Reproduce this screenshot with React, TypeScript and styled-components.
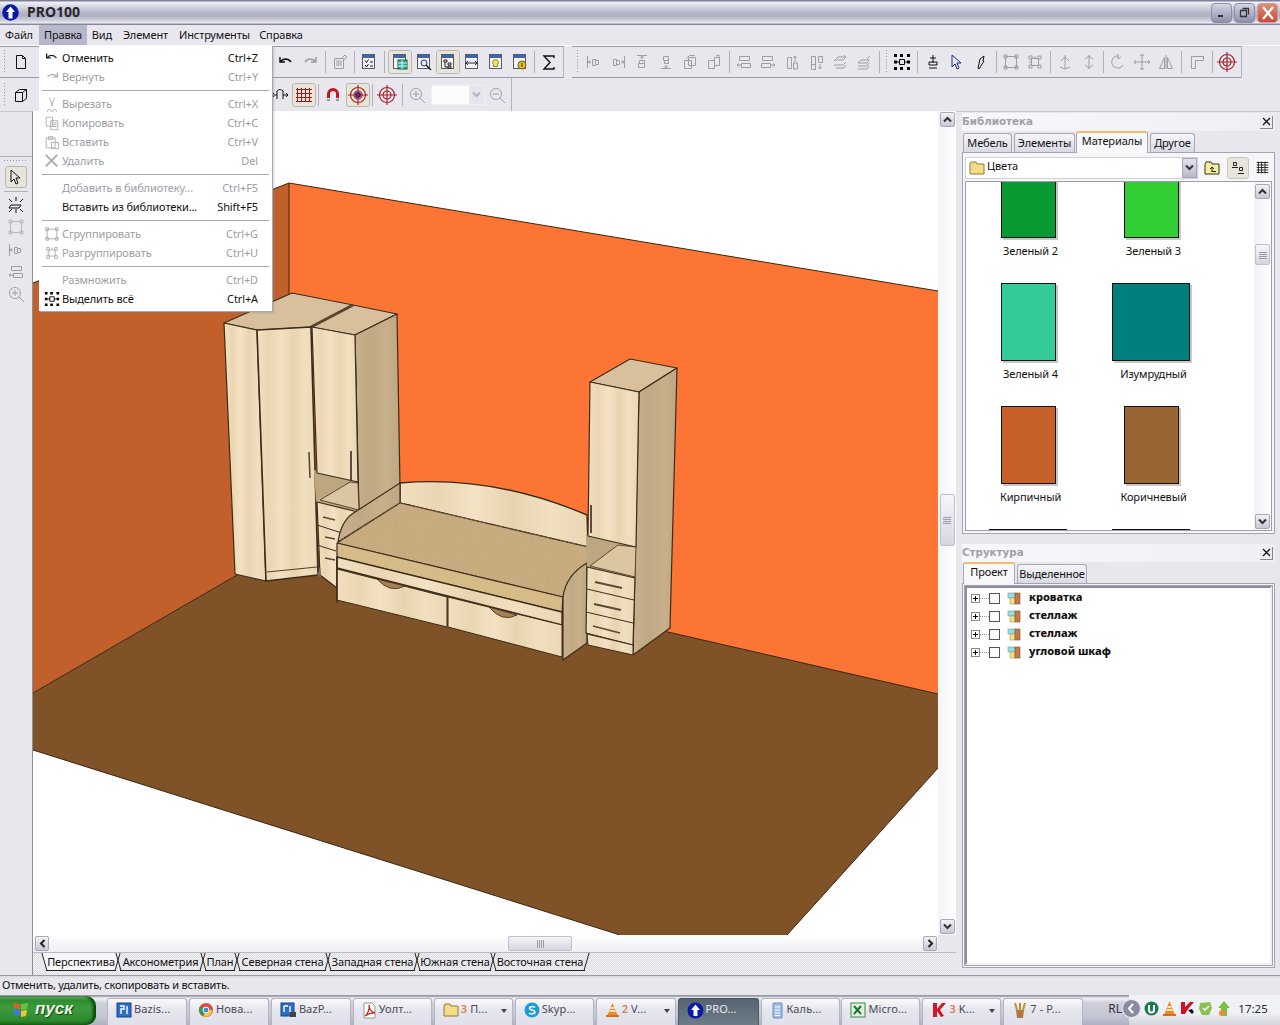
import React from "react";
import styled, { createGlobalStyle } from "styled-components";

const UI = `"Noto Sans", "Liberation Sans", sans-serif`;
const FACE = "#e9e7ee";
const DIS = "#9d9da6";

const Global = createGlobalStyle`
  html, body { margin: 0; padding: 0; width: 1280px; height: 1025px; overflow: hidden; background: ${FACE}; }
  * { box-sizing: border-box; }
  #root { width: 1280px; height: 1025px; }
`;

const Page = styled.div`
  width: 1280px; height: 1025px; display: flex; flex-direction: column;
  font: 11px/13px ${UI}; letter-spacing: -0.12px; color: #111; background: ${FACE}; overflow: hidden; position: relative;
`;

/* ---------- title ---------- */
const TitleBar = styled.div`
  height: 25px; flex: none; display: flex; align-items: center; padding: 0 2px 0 2px;
  background: linear-gradient(#7d7f9c 0, #7d7f9c 1px, #f1f1f6 2px, #e0e0e9 5px, #b3b5c6 13px, #aeb0c2 16px, #dcdde6 22px, #f2f2f6 23px, #85879a 24px, #85879a 25px);
`;
const AppLogo = styled.svg`width: 17px; height: 17px; flex: none;`;
const TitleText = styled.span`
  margin-left: 8px; padding-bottom: 2px; font: bold 14px/16px "Noto Sans", sans-serif; color: #26262e; flex: 1; letter-spacing: 0;
`;
const WinBtn = styled.div<{ $red?: boolean }>`
  width: 21px; height: 20px; margin-left: 2px; border-radius: 4px; border: 1px solid ${p => (p.$red ? "#c9a09a" : "#8b8da6")};
  background: ${p => p.$red ? "linear-gradient(#e08a78,#c74a38)" : "linear-gradient(#d4d6e4,#8d90ab)"};
  display: flex; align-items: center; justify-content: center;
`;

/* ---------- menu ---------- */
const MenuBar = styled.div`
  height: 21px; flex: none; display: flex; padding-left: 1px; background: ${FACE}; border-bottom: 1px solid #fbfbfd; position: relative;
`;
const MenuItem = styled.div<{ $on?: boolean; $w: number; $ml?: number }>`
  width: ${p => p.$w}px; height: 20px; margin-left: ${p => p.$ml || 0}px; padding-bottom: 2px; display: flex; align-items: center; justify-content: center; font-size: 11px;
  background: ${p => (p.$on ? "#b6b8ca" : "transparent")};
`;
const Dropdown = styled.div`
  position: absolute; left: 39px; top: 46px; width: 233px; height: 265px; background: #fff; z-index: 5; padding: 2px 3px 2px 3px;
  box-shadow: 1px 1px 0 #a8a8b0, 2px 2px 2px #8886;
`;
const DropRow = styled.div<{ $dim?: boolean }>`
  height: 19px; display: flex; align-items: center; color: ${p => (p.$dim ? DIS : "#111")};
`;
const DropIcon = styled.div`width: 20px; height: 19px; flex: none; display: flex; align-items: center; justify-content: center;`;
const DropLabel = styled.span`flex: 1;`;
const DropKey = styled.span`margin-right: 11px;`;
const DropSep = styled.div`height: 8px; display: flex; align-items: center; &::before { content: ""; flex: 1; height: 1px; background: #a8a8b2; }`;

/* ---------- toolbars ---------- */
const ToolRow = styled.div<{ $h: number }>`height: ${p => p.$h}px; flex: none; display: flex; background: ${FACE};`;
const Band = styled.div<{ $w: number; $left?: number; $flat?: boolean }>`
  width: ${p => p.$w}px; margin-left: ${p => p.$left || 0}px; flex: none; display: flex; align-items: center; position: relative;
  border-right: 1px solid #b5b5c0;
  ${p => (p.$flat ? "" : "border-bottom: 1px solid #9a9aa6; border-top: 1px solid #9a9aa6;")}
`;
const Grip = styled.div<{ $w: number }>`
  width: ${p => p.$w}px; height: 24px; flex: none; display: flex; justify-content: center;
  &::before { content: ""; width: 1px; height: 100%; background: repeating-linear-gradient(#9a9aa4 0 1px, transparent 1px 3px); }
`;
const Gap = styled.div<{ $w: number }>`width: ${p => p.$w}px; flex: none;`;
const Tool = styled.div<{ $on?: boolean; $w?: number }>`
  width: ${p => p.$w || 24}px; height: 24px; flex: none; display: flex; align-items: center; justify-content: center;
  ${p => p.$on ? "border: 1px solid #b8b8a8; border-radius: 3px; background: #e7e5d9; box-shadow: inset 0 0 1px #fff;" : ""}
`;
const Sep = styled.div<{ $w: number }>`
  width: ${p => p.$w}px; height: 22px; flex: none; display: flex; justify-content: center;
  &::before { content: ""; width: 1px; height: 100%; background: #b0b0ba; }
`;
const ZoomCombo = styled.div`
  width: 54px; height: 20px; flex: none; background: #fbfbfc; border: 1px solid #efeef2; display: flex; justify-content: flex-end; align-items: center;
`;
const ComboArrowBox = styled.div`width: 15px; height: 18px; background: #e6e4ec; display: flex; align-items: center; justify-content: center;`;

/* ---------- main ---------- */
const Main = styled.div`flex: 1; min-height: 0; display: flex; background: ${FACE};`;
const LeftBar = styled.div`
  width: 33px; flex: none; display: flex; flex-direction: column; padding-top: 44px; border-right: 1px solid #8e8e98; border-top: 1px solid #c8c8d0;
`;
const LeftBand = styled.div`
  display: flex; flex-direction: column; align-items: center; border-top: 1px solid #b0b0b8; padding-top: 3px;
  & > ${Tool} { width: 22px; height: 22.2px; }
`;
const HGrip = styled.div`width: 24px; height: 1px; margin: 0 0 5px; background: repeating-linear-gradient(90deg, #9a9aa4 0 1px, transparent 1px 3px);`;
const HSep = styled.div`width: 24px; height: 1px; background: #b0b0ba; margin: 3px 0 2px;`;

const Center = styled.div`width: 923px; flex: none; display: flex; flex-direction: column;`;
const ViewRow = styled.div`flex: 1; min-height: 0; display: flex;`;
const Scene = styled.svg`width: 905px; height: 824px; display: block; flex: none; background: #fff;`;
const VBar = styled.div`
  width: 18px; flex: none; display: flex; flex-direction: column; align-items: center; padding: 1px 0;
  background: linear-gradient(90deg,#f4f4f8,#fff);
`;
const SBtn = styled.div<{ $w?: number; $h?: number }>`
  width: ${p => p.$w || 15}px; height: ${p => p.$h || 15}px; flex: none; border: 1px solid #a8a8b6; border-radius: 2px;
  background: linear-gradient(#f2f2f6,#c7c8d6); display: flex; align-items: center; justify-content: center;
`;
const Thumb = styled.div<{ $w: number; $h: number }>`
  width: ${p => p.$w}px; height: ${p => p.$h}px; flex: none; border: 1px solid #c0c0cc; border-radius: 2px;
  background: linear-gradient(#f6f6f9,#d5d6e0); display: flex; align-items: center; justify-content: center;
`;
const Fill = styled.div`flex: 1;`;
const Pad = styled.div<{ $h?: number; $w?: number }>`flex: none; height: ${p => (p.$h ? p.$h + "px" : "auto")}; width: ${p => (p.$w ? p.$w + "px" : "auto")};`;
const HBar = styled.div`
  height: 17px; flex: none; display: flex; align-items: center; padding: 0 1px 0 2px; width: 905px;
  background: linear-gradient(#fff,#eeeef3);
`;
const TabStrip = styled.div`
  height: 23px; flex: none; display: flex; padding: 0 0 0 11px; border-top: 1px solid #b8b8c4;
  background-color: #eeeef2;
  background-image: repeating-conic-gradient(#dcdce2 0 25%, #f3f3f6 0 50%);
  background-size: 2px 2px;
`;
const SheetTab = styled.div<{ $w: number; $on?: boolean }>`
  width: ${p => p.$w}px; height: 18px; flex: none; position: relative; display: flex; align-items: center; justify-content: center;
  padding-bottom: 2px; font-size: 11px; color: #111;
  &::before {
    content: ""; position: absolute; left: -2px; right: -2px; top: 0; bottom: 0;
    background: ${p => (p.$on ? "#f6f6f9" : "transparent")};
    clip-path: polygon(0 0, 100% 0, calc(100% - 5px) 100%, 5px 100%);
  }
  &::after {
    content: ""; position: absolute; left: 2px; right: 2px; top: 0; bottom: 0;
    border-bottom: 1px solid #222;
  }
`;
const TabLabel = styled.span`position: relative; z-index: 1;`;
const Slash = styled.i<{ $dir: "l" | "r" }>`
  position: absolute; top: 0; height: 18px; width: 1px; background: #222; z-index: 1;
  ${p => (p.$dir === "l" ? "left: 0; transform: skewX(16deg);" : "right: 0; transform: skewX(-16deg);")}
`;

/* ---------- right panels ---------- */
const Right = styled.div`width: 324px; flex: none; display: flex; flex-direction: column; padding: 1px 5px 7px 6px; border-top: 1px solid #c8c8d0;`;
const DockHead = styled.div`
  height: 18px; flex: none; display: flex; align-items: center; justify-content: space-between;
  background: linear-gradient(90deg,#f8f8fb,#efeef4);
`;
const DockTitle = styled.span`font: bold 10.3px/14px "DejaVu Sans", sans-serif; color: #a0a0a8; letter-spacing: 0; padding-bottom: 2px;`;
const DockClose = styled.div`width: 13px; height: 13px; flex: none; display: flex; align-items: center; justify-content: center; border-right: 1px solid #888; border-bottom: 1px solid #888; margin-right: 2px;`;
const Tabs = styled.div`height: 21px; flex: none; display: flex; align-items: flex-end; padding-left: 1px; gap: 2px;`;
const Tab = styled.div<{ $w: number; $on?: boolean; $ml?: number }>`
  width: ${p => p.$w}px; height: 19px; flex: none; margin-left: ${p => p.$ml || 0}px; padding-bottom: 2px;
  display: flex; align-items: center; justify-content: center; font-size: 11px; position: relative;
  border: 1px solid #a8a8b4; border-bottom: 0; border-radius: 3px 3px 0 0;
  background: ${p => (p.$on ? "#f8f8fa" : "linear-gradient(#f6f6f9,#d8d9e4)")};
  ${p => p.$on ? "border-top: 2px solid #f0bc70; margin-bottom: -1px; height: 22px; padding-bottom: 5px; z-index: 1;" : ""}
`;
const TabBody = styled.div<{ $h?: number }>`
  ${p => (p.$h ? `height: ${p.$h}px; flex: none;` : "flex: 1; min-height: 0;")}
  display: flex; flex-direction: column; border: 1px solid #a4a4ae; padding: 2px; background: #f6f6f9;
`;
const ComboRow = styled.div`height: 24px; flex: none; display: flex; align-items: center; padding-top: 1px;`;
const FolderCombo = styled.div`
  width: 233px; height: 22px; flex: none; background: #fff; border: 1px solid #d0d0d8; display: flex; align-items: center; padding-left: 3px; gap: 2px;
`;
const ComboText = styled.span`flex: 1; font-size: 11px; padding-bottom: 5px;`;
const ComboBtn = styled.div`width: 15px; height: 20px; background: linear-gradient(#e2e3ec,#b7b9ca); border: 1px solid #a6a8b8; display: flex; align-items: center; justify-content: center;`;
const MiniBtn = styled.div<{ $on?: boolean; $ml: number }>`
  width: 22px; height: 22px; flex: none; margin-left: ${p => p.$ml}px; display: flex; align-items: center; justify-content: center;
  ${p => (p.$on ? "background:#e7e5d9;border:1px solid #c6c6bc;border-radius:3px;" : "")}
`;
const ListBox = styled.div`
  flex: 1; min-height: 0; margin-top: 2px; display: flex; background: #fff; border: 1px solid #9c9caa; overflow: hidden;
`;
const Tiles = styled.div`
  flex: 1; min-width: 0; display: grid; grid-template-columns: 123px 123px; grid-auto-rows: 123px; padding-left: 3px; margin-top: -22px; align-content: start;
`;
const Tile = styled.div`display: flex; flex-direction: column; align-items: center;`;
const SwatchBox = styled.div`height: 78px; flex: none; display: flex; align-items: flex-start; justify-content: center; margin-right: 5px;`;
const Swatch = styled.div<{ $c: string; $w: number }>`
  width: ${p => p.$w}px; height: 78px; background: ${p => p.$c}; border: 1px solid #111; box-shadow: 2px 2px 0 #c8c8c8;
`;
const TileLabel = styled.div`margin-top: 6px; height: 14px; font-size: 11px; line-height: 14px; text-align: center;`;
const ListScroll = styled.div`
  width: 17px; flex: none; margin-left: auto; display: flex; flex-direction: column; align-items: center; padding: 2px 0 1px; background: linear-gradient(90deg,#f0f0f6,#fff);
`;
const Tree = styled.div`
  flex: 1; min-height: 0; background: #fff; border: 2px solid; border-color: #8d8d98 #f0f0f4 #f0f0f4 #8d8d98; padding: 1px 0 0 3px; display: flex; flex-direction: column;
  outline: 1px solid #a4a4ae;
`;
const TreeRow = styled.div`height: 18px; flex: none; display: flex; align-items: center; padding-left: 1px;`;
const Plus = styled.div`
  width: 9px; height: 9px; flex: none; border: 1px solid #888; background: #fff; position: relative;
  &::before { content: ""; position: absolute; left: 1px; right: 1px; top: 3px; height: 1px; background: #000; }
  &::after { content: ""; position: absolute; top: 1px; bottom: 1px; left: 3px; width: 1px; background: #000; }
`;
const Dots = styled.div`width: 9px; height: 1px; flex: none; background: repeating-linear-gradient(90deg,#999 0 1px,transparent 1px 2px);`;
const Check = styled.div`width: 11px; height: 11px; flex: none; border: 1px solid #555; background: #fbfbfb;`;
const TreeIcon = styled.svg`width: 14px; height: 13px; flex: none; margin-left: 7px;`;
const TreeText = styled.span`margin-left: 8px; font: 800 11px/14px "Noto Sans", sans-serif; letter-spacing: 0; color: #111; padding-bottom: 2px;`;

/* ---------- status + taskbar ---------- */
const Status = styled.div`
  height: 20px; flex: none; display: flex; align-items: center; padding: 0 0 2px 2px; font-size: 11px; letter-spacing: -0.22px;
  background: linear-gradient(#d8d8de,#e8e8ec 3px,#e8e8ec);
  border-top: 1px solid #9a9aa4;
`;
const Taskbar = styled.div`
  height: 30px; flex: none; display: flex; align-items: stretch;
  background: linear-gradient(#9898a8 0,#9898a8 1px,#f2f2f6 3px,#cfd0dc 8px,#c4c5d3 22px,#aeb0c0 100%);
`;
const Start = styled.div`
  width: 96px; flex: none; display: flex; align-items: center; padding: 0 0 3px 12px; gap: 5px; border-radius: 0 10px 10px 0;
  background: linear-gradient(#7cb97c 0,#2f8d2f 4px,#3d9a3d 12px,#2e8a2e 24px,#1e6c1e 100%);
  box-shadow: inset -3px 0 3px #0a4a0a; margin-top: 1px;
`;
const StartText = styled.span`font: italic bold 17px/18px "Liberation Sans", sans-serif; letter-spacing: 0; color: #e6f2e6; text-shadow: 1px 1px 1px #124012;`;
const Tasks = styled.div`display: flex; padding-left: 11px; gap: 1.95px; flex: none; align-items: flex-end;`;
const Task = styled.div<{ $on?: boolean; $w: number }>`
  width: ${p => p.$w}px; height: 27px; flex: none; display: flex; align-items: center; padding: 0 0 4px 8px; gap: 2px; position: relative;
  font-size: 11px; color: ${p => (p.$on ? "#e8eaee" : "#4a4a58")}; border-radius: 3px 3px 0 0;
  background: ${p => (p.$on ? "linear-gradient(#56646f,#6d7c87)" : "linear-gradient(#fafafc,#e6e6ee 40%,#dfe0ea)")};
  border: 1px solid ${p => (p.$on ? "#4d5962" : "#b4b4c2")}; border-bottom: 0;
`;
const TaskText = styled.span`padding-bottom: 3px; letter-spacing: 0.1px;`;
const TaskCount = styled.span`color: #d9805a; font-weight: 600;`;
const TaskArrow = styled.i`position: absolute; right: 5px; top: 10px; width: 0; height: 0; border: 3px solid transparent; border-top: 4px solid #444; border-bottom: 0;`;
const Lang = styled.div`flex: none; margin-left: 25px; width: 18px; display: flex; align-items: center; padding-bottom: 3px; font-size: 12px; color: #333;`;
const Tray = styled.div`
  flex: 1; display: flex; align-items: center; margin-left: 3px; gap: 3px; padding-bottom: 3px;
  background: linear-gradient(#f2f3f6,#eef0f3 60%,#d4d6de); position: relative;
`;
const Clock = styled.span`margin-left: 4px; font-size: 11.5px; letter-spacing: 0; color: #2a2a34;`;
const TrayI = styled.svg`width: 15px; height: 17px; flex: none;`;
const Chevron = styled.svg`width: 19px; height: 19px; flex: none; margin-left: -7px;`;

/* ---------- icon helper ---------- */
type IP = { d: string; c?: string; f?: string; w?: number; s?: number };
const Ico = ({ d, c = "#111", f = "none", w = 1, s = 18 }: IP) => (
  <svg width={s} height={s} viewBox="0 0 18 18" fill={f} stroke={c} strokeWidth={w}><path d={d} /></svg>
);
const P = {
  doc: "M4.5 2.5h6l3 3v10h-9zM10.500 2.5v3h3",
  cube: "M3.5 6.5l4-3h7v9l-4 3h-7zM3.5 6.5h7v9M10.500 6.5l4-3",
  undo: "M3 4v5h5M3.5 9C6 5 11 5 14 9",
  redo: "M15 4v5h-5M14.500 9C12 5 7 5 4 9",
  prop: "M3.5 5.5h9v10h-9zM5 8h6M5 10h6M5 12h6M11 5l3-3 2 2-3 3",
  sigma: "M14 5V3H4l6 6.500L4 16h10v-2",
  al1: "M2.5 3v12M3 9h3M5 7.5L3 9l2 1.500M7.5 6.5h3v6h-3zM10.500 7.5h3v4h-3z",
  al2: "M15.500 3v12M15 9h-3M13 7.5L15 9l-2 1.500M4.5 6.5h3v6h-3zM7.5 7.5h3v4h-3z",
  al3: "M4 2.5h10M9 3v3M7.5 5L9 3l1.500 2M6.5 7.5h5v3h-5zM5.5 10.500h6v4h-6z",
  al4: "M4 15.500h10M9 15v-3M7.5 13L9 15l1.500-2M6.5 3.5h5v4h-5zM7.5 7.5h4v3h-4z",
  al5: "M3.5 7.5h7v8h-7zM7.5 4.5h7v8h-7zM5.5 5.5l3-3h5",
  al6: "M3.5 7.5h6v8h-6zM9.500 4.5h5v8h-5zM11 3l3-1v3",
  d1: "M4.5 3.5h10v4h-10zM6.5 10.500h9v4h-9zM2 12h4M4 10.500L2 12l2 1.500",
  d2: "M3.5 3.5h10v4h-10zM2.5 10.500h9v4h-9zM12 12h4M14 10.500l2 1.500-2 1.500",
  d3: "M4.5 4.5h4v11h-4zM12 9V3M10.500 5L12 3l1.500 2M10.500 10h4v6h-4z",
  d4: "M4.5 3.5h4v8h-4zM11.500 3.5h4v6h-4zM13 11v5M11.500 14l1.500 2 1.500-2M4.5 11.500h4v5h-4z",
  d5: "M3 8l4-4h8l-3 3H4zM3 12h9l3-3M5 15h8l2-3M13 2l2 2",
  d6: "M3 10l3-3h8l-2 3zM3 13h9l2-3M3 16h9l2-3M12 6l3-3",
  plusm: "M9 2v8M6 5h6M5 9h8v3H5zM5 15h8",
  pen: "M6 15l2-9 4-3-1 5 1 0-5 8z",
  grp: "M3.5 3.5h11v11h-11zM2 2h3v3H2zM13 2h3v3h-3zM2 13h3v3H2zM13 13h3v3h-3z",
  ungrp: "M5.5 5.5h7v7h-7zM3 3h3v3H3zM12 3h3v3h-3zM3 12h3v3H3zM12 12h3v3h-3zM9 3v2M3 9h2",
  rot1: "M9 2v14M5 8l4-4 4 4M4 14l5 2 5-2",
  rot2: "M9 2v14M5 12l4 3 4-3M5 6l4-3 4 3",
  ccw: "M9 3a6 6 0 1 0 5 9M9 1v5l3-2",
  move: "M9 1v16M1 9h16M7 3l2-2 2 2M7 15l2 2 2-2M3 7L1 9l2 2M15 7l2 2-2 2",
  mirror: "M9 2v14M7.5 15.500h-5l5-11zM10.500 15.500h5l-5-11z",
  corner: "M3.5 3.5h12v4h-8v8h-4z",
  zoomIn: "M8 2.5a5.500 5.500 0 1 1-.1 0zM5 8h6M8 5v6M12 12l5 5",
  zoomOut: "M8 2.5a5.500 5.500 0 1 1-.1 0zM5 8h6M12 12l5 5",
  sun: "M4 9h10l-2 3H2zM2 3l3 3M16 3l-3 3M9 1v4M2 16l3-3M16 16l-3-3M9 13v4",
  cut: "M6 2l4 9M12 2l-4 9M6 15a2 2 0 1 1-.1 0zM12 15a2 2 0 1 1-.1 0z",
  copy: "M2.5 2.5h7v10h-7zM7.5 6.5h8v10h-8zM9 9h5M9 11h5M9 13h5",
  paste: "M2.5 4.5h10v11h-10zM5 3h5v3H5zM8.5 9.500h8v7h-8z",
  del: "M2 2l13 13M15 2L2 15",
  listI: "M2 3h14M2 6h14M2 9h14M2 12h14M2 15h14M4 2v14M8 2v14M12 2v14",
  arrow: "M4 2l0 12 3-3 2 5 2-1-2-5h4z",
};
const GripIcon = ({ s = 18 }: { s?: number }) => (
  <svg width={s} height={s} viewBox="0 0 18 18">
    <path d="M1 1h3v3H1zM7 1h3v3H7zM14 1h3v3h-3zM1 14h3v3H1zM7 14h3v3H7zM14 14h3v3h-3zM1 7.500h3v3H1zM14 7.500h3v3h-3z" fill="#000" />
    <path d="M6.500 6.500h5v5h-5zM4 9h3M11 9h3" fill="none" stroke="#000" />
  </svg>
);
const WinIcon = ({ children }: { children?: React.ReactNode }) => (
  <svg width="18" height="18" viewBox="0 0 18 18" fill="none">
    <rect x="2.500" y="1.500" width="12" height="14" fill="#f4f4f8" stroke="#59596a" />
    <rect x="3" y="2" width="11" height="3" fill="#3f66a8" />
    {children}
  </svg>
);
const Tgt = ({ fillC }: { fillC?: string }) => (
  <svg width="20" height="20" viewBox="0 0 20 20" fill="none" stroke="#a8202c" strokeWidth="1.2">
    <circle cx="10" cy="10" r="7.500" /><circle cx="10" cy="10" r="4" />
    {fillC && <circle cx="10" cy="10" r="3" fill={fillC} stroke="none" />}
    <path d="M10 0v20M0 10h20" />
  </svg>
);
const Dn = ({ c = "#333" }: { c?: string }) => <svg width="9" height="7" viewBox="0 0 9 7" fill="none" stroke={c} strokeWidth="2"><path d="M1 1.500l3.500 3.500L8 1.500" /></svg>;
const Up = () => <svg width="9" height="7" viewBox="0 0 9 7" fill="none" stroke="#333" strokeWidth="2"><path d="M1 5.500L4.500 2 8 5.500" /></svg>;
const Lf = () => <svg width="7" height="9" viewBox="0 0 7 9" fill="none" stroke="#222" strokeWidth="2"><path d="M5.500 1L2 4.500 5.500 8" /></svg>;
const Rg = () => <svg width="7" height="9" viewBox="0 0 7 9" fill="none" stroke="#222" strokeWidth="2"><path d="M1.500 1L5 4.500 1.500 8" /></svg>;
const VGrip = () => <svg width="8" height="8" viewBox="0 0 8 8" stroke="#9a9aa8"><path d="M0 1.500h8M0 3.500h8M0 5.500h8M0 7.500h8" /></svg>;
const HGripI = () => <svg width="8" height="8" viewBox="0 0 8 8" stroke="#9a9aa8"><path d="M1.500 0v8M3.500 0v8M5.500 0v8M7.500 0v8" /></svg>;
const FolderI = ({ s = 16 }: { s?: number }) => (
  <svg width={s} height={s - 2} viewBox="0 0 16 14"><path d="M1 3l1-2h5l1 2h7v10H1z" fill="#f3dd88" stroke="#927a30" /></svg>
);

const dropdown: (null | { t: string; k: string; i?: keyof typeof P | "grip"; dim?: boolean })[] = [
  { t: "Отменить", k: "Ctrl+Z", i: "undo" },
  { t: "Вернуть", k: "Ctrl+Y", i: "redo", dim: true },
  null,
  { t: "Вырезать", k: "Ctrl+X", i: "cut", dim: true },
  { t: "Копировать", k: "Ctrl+C", i: "copy", dim: true },
  { t: "Вставить", k: "Ctrl+V", i: "paste", dim: true },
  { t: "Удалить", k: "Del", i: "del", dim: true },
  null,
  { t: "Добавить в библиотеку...", k: "Ctrl+F5", dim: true },
  { t: "Вставить из библиотеки...", k: "Shift+F5" },
  null,
  { t: "Сгруппировать", k: "Ctrl+G", i: "grp", dim: true },
  { t: "Разгруппировать", k: "Ctrl+U", i: "ungrp", dim: true },
  null,
  { t: "Размножить", k: "Ctrl+D", dim: true },
  { t: "Выделить всё", k: "Ctrl+A", i: "grip" },
];

const Wood = "url(#wood)";
const Side = "url(#side)";
const E = "#3c2c1c";
const Poly = ({ p, f, w = 1.2 }: { p: string; f: string; w?: number }) => <polygon points={p} fill={f} stroke={E} strokeWidth={w} strokeLinejoin="round" />;
const Ln = ({ a, w = 1.2, c = E }: { a: [number, number, number, number]; w?: number; c?: string }) => <line x1={a[0]} y1={a[1]} x2={a[2]} y2={a[3]} stroke={c} strokeWidth={w} />;

const Room = () => (
  <Scene viewBox="33 111 905 824">
    <defs>
      <linearGradient id="wood" x1="0" x2="1" y1="0" y2="0">
        <stop offset="0" stopColor="#f1dfc0" /><stop offset=".2" stopColor="#ebd6b2" /><stop offset=".4" stopColor="#f3e2c4" />
        <stop offset=".6" stopColor="#e9d4af" /><stop offset=".8" stopColor="#f1dfbf" /><stop offset="1" stopColor="#ebd7b4" />
      </linearGradient>
      <linearGradient id="side" x1="0" x2="1" y1="0" y2="0">
        <stop offset="0" stopColor="#c9b18d" /><stop offset=".35" stopColor="#bfa883" /><stop offset=".7" stopColor="#c8b08b" /><stop offset="1" stopColor="#bda680" />
      </linearGradient>
      <filter id="speck" x="0" y="0" width="100%" height="100%">
        <feTurbulence type="fractalNoise" baseFrequency="0.7" numOctaves="2" seed="4" result="n" />
        <feColorMatrix in="n" type="matrix" values="0 0 0 0 0.45  0 0 0 0 0.35  0 0 0 0 0.2  0 0 0 .9 -.3" result="m" />
        <feComposite in="m" in2="SourceGraphic" operator="in" result="c" />
        <feMerge><feMergeNode in="SourceGraphic" /><feMergeNode in="c" /></feMerge>
      </filter>
    </defs>
    <polygon points="289,183 938,291 938,694 289,545" fill="#fd7535" />
    <polygon points="33,283 289,183 289,545 33,693" fill="#c1602a" />
    <polygon points="33,693 289,545 938,694 938,768 787,935 620,935 33,750" fill="#7f5327" />
    <path d="M33 283L289 183L938 291M289 183V545M33 693L289 545L938 694M33 750L620 935M938 768L787 935" fill="none" stroke="#3c2410" strokeWidth="1" />

    {/* corner wardrobe */}
    <Poly p="224,323 292,293 353,305 311,327 257,330" f="#d8c09c" />
    <Poly p="224,323 257,330 266,581 235,574" f={Wood} />
    <Poly p="257,330 311,327 318,575 266,581" f={Wood} w={1.6} />
    <Ln a={[267, 572, 317, 567]} w={0.9} />
    <Ln a={[309, 452, 310, 478]} w={1.6} c="#5a4a3a" />
    {/* wall cabinet */}
    <polygon points="314,470 358,480 359,512 316,502" fill="#bda680" />
    <Poly p="311,327 353,305 397,314 355,335" f="#d8c09c" />
    <Ln a={[311, 327, 353, 305]} w={3} c="#5a4630" />
    <Poly p="355,335 397,314 400,486 359,510" f={Side} />
    <Poly p="312,327 355,335 358,482 317,473" f={Wood} />
    <Ln a={[351, 451, 351, 480]} w={1.8} c="#4a3c30" />
    <Poly p="350,482 358,483 359,510 320,500" f="#dcc6a2" w={0.8} />
    {/* left drawers */}
    <Poly p="317,502 358,512 337,560 337,588 320,575" f={Wood} />
    <Ln a={[317, 525, 342, 533]} w={1} />
    <Ln a={[317, 545, 336, 551]} w={1} />
    <Ln a={[323, 517, 335, 520]} w={1.6} c="#5a4a3a" />
    <Ln a={[325, 537, 335, 539]} w={1.6} c="#5a4a3a" />
    <Ln a={[325, 558, 335, 560]} w={1.6} c="#5a4a3a" />
    <polygon points="317,575 320,567 321,577" fill="#7a7264" />

    {/* bed */}
    <path d="M400 483Q493 475 587 515L588 547L400 503Z" fill={Wood} stroke={E} strokeWidth="1.4" />
    <path d="M400 483L400 503L338 542Q341 522 352 514Z" fill={Side} stroke={E} strokeWidth="1.2" />
    <polygon points="400,503 588,547 588,563 563,597 337,543" fill="#cbae80" stroke={E} strokeWidth="1.2" filter="url(#speck)" />
    <Poly p="337,543 563,597 562,612 337,557" f="#d6ba88" />
    <Poly p="337,557 562,612 562,625 337,568" f={Wood} w={1.4} />
    <Poly p="337,569 447,597 447,627 337,600" f={Wood} w={1} />
    <Poly p="448,597 562,625 562,657 448,627" f={Wood} w={1} />
    <path d="M377 579Q390 594 405 586Z" fill="#a98050" stroke={E} strokeWidth="0.8" />
    <path d="M489 607Q502 623 517 615Z" fill="#a98050" stroke={E} strokeWidth="0.8" />
    <path d="M563 597Q566 575 587 563L587 643L563 660Z" fill={Side} stroke={E} strokeWidth="1.2" />
    <Ln a={[337, 557, 337, 603]} w={1.4} />

    {/* right cabinet */}
    <Poly p="590,382 630,359 677,368 639,392" f="#d8c09c" />
    <polygon points="586,534 637,545 636,579 587,568" fill="#bda680" />
    <Poly p="639,392 677,368 670,628 633,655" f={Side} />
    <Poly p="590,382 639,392 636,547 588,536" f={Wood} />
    <Ln a={[591, 505, 591, 533]} w={1.8} c="#4a3c30" />
    <Poly p="618,545 636,547 635,577 590,566" f="#dcc6a2" w={0.8} />
    <Poly p="587,567 635,578 633,645 586,633" f={Wood} />
    <Ln a={[587, 589, 634, 600]} w={1} />
    <Ln a={[586, 612, 633, 623]} w={1} />
    <Ln a={[595, 582, 622, 588]} w={1.8} c="#5a4a3a" />
    <Ln a={[594, 604, 621, 610]} w={1.8} c="#5a4a3a" />
    <Ln a={[593, 626, 620, 633]} w={1.8} c="#5a4a3a" />
    <Poly p="587,634 633,645 633,655 588,645" f={Wood} w={1} />
  </Scene>
);

const sheetTabs: [string, number][] = [["Перспектива", 74], ["Аксонометрия", 85], ["План", 34], ["Северная стена", 91], ["Западная стена", 89], ["Южная стена", 76], ["Восточная стена", 94]];
const tiles: [string, string, number][] = [
  ["Зеленый 2", "#0a9a33", 55], ["Зеленый 3", "#32cd32", 55],
  ["Зеленый 4", "#33cc99", 55], ["Изумрудный", "#007f7f", 78],
  ["Кирпичный", "#c8602a", 55], ["Коричневый", "#996633", 55],
  ["", "#ffffff", 78], ["", "#ffffff", 78],
];

const Win = (path: string, c = "#333") => <svg width="11" height="11" viewBox="0 0 11 11" fill="none" stroke={c} strokeWidth="1.3"><path d={path} /></svg>;

const tasks: { t: string; c?: string; arrow?: boolean; on?: boolean; w: number; icon: React.ReactNode }[] = [
  { t: "Bazis...", w: 80, icon: <svg width="16" height="16" viewBox="0 0 16 16"><rect x="1" y="1" width="14" height="14" fill="#2a6fc8" stroke="#1c3f80" /><path d="M4 4h4v3H5v5M11 4v8" stroke="#fff" strokeWidth="1.400" fill="none" /></svg> },
  { t: "Нова...", w: 80, icon: <svg width="16" height="16" viewBox="0 0 16 16"><circle cx="8" cy="8" r="7" fill="#dd4b3a" /><path d="M8 8L14.500 8A7 7 0 0 1 5 14.300z" fill="#f4c534" /><path d="M8 8L5 14.300A7 7 0 0 1 1.800 4.500z" fill="#3a9a48" /><circle cx="8" cy="8" r="3" fill="#4a88e0" stroke="#fff" /></svg> },
  { t: "BazP...", w: 80, icon: <svg width="17" height="16" viewBox="0 0 17 16"><rect x="1" y="1" width="13" height="13" fill="#2a6fc8" stroke="#1c3f80" /><path d="M4 4h4M4 4v6M10 4v6" stroke="#fff" strokeWidth="1.400" /><rect x="10" y="10" width="6" height="5" fill="#444" /></svg> },
  { t: "Уолт...", w: 79, icon: <svg width="15" height="17" viewBox="0 0 15 17"><path d="M2 1h8l3 3v12H2z" fill="#fff" stroke="#999" /><path d="M3 14C6 12 8 6 7 3c0 4 3 7 6 8-4-.5-7 1-10 3z" fill="none" stroke="#c8201c" strokeWidth="1.300" /></svg> },
  { t: "П...", c: "3", arrow: true, w: 79, icon: <FolderI /> },
  { t: "Skyp...", w: 79, icon: <svg width="16" height="16" viewBox="0 0 16 16"><circle cx="8" cy="8" r="7.500" fill="#1e9cd8" /><path d="M11 5.500C9 4 5 4.500 5.500 6.500S11 8 11 10s-4.500 2.500-6 1" stroke="#fff" strokeWidth="1.500" fill="none" /></svg> },
  { t: "V...", c: "2", arrow: true, w: 80, icon: <svg width="15" height="16" viewBox="0 0 15 16"><path d="M7.500 1l5 12H2.500z" fill="#f28a1c" /><path d="M5.500 6h4M4.500 9h6" stroke="#fff" strokeWidth="1.300" /><rect x="1" y="13" width="13" height="2" fill="#d0701c" /></svg> },
  { t: "PRO...", on: true, w: 81, icon: <svg width="17" height="17" viewBox="0 0 17 17"><circle cx="8.500" cy="8.500" r="8" fill="#0a1aa8" /><path d="M8.500 2.500L13 8h-2.500v6h-4V8H4z" fill="#fff" /></svg> },
  { t: "Каль...", w: 79, icon: <svg width="15" height="17" viewBox="0 0 15 17"><rect x="3" y="1" width="9" height="15" rx="1" fill="#9fc0e8" stroke="#6a8ab0" /><path d="M5 5h5M5 8h5M5 11h5M5 13.500h5" stroke="#fff" /></svg> },
  { t: "Micro...", w: 79, icon: <svg width="16" height="16" viewBox="0 0 16 16"><rect x="1" y="1" width="14" height="14" fill="#e4f0e0" stroke="#3a8a3a" /><path d="M4 4l7 8M11 4l-7 8" stroke="#1a7a2a" strokeWidth="2" /></svg> },
  { t: "K...", c: "3", arrow: true, w: 79, icon: <svg width="16" height="16" viewBox="0 0 16 16"><path d="M2 1h4v6l5-6h4L9 8l4 6-3 1-4-6v6H2z" fill="#d01828" /></svg> },
  { t: "7 - P...", w: 80, icon: <svg width="16" height="17" viewBox="0 0 16 17"><path d="M3 1l2 7M8 1v7M13 1l-2 7" stroke="#c09030" strokeWidth="2" /><path d="M4 8h8l-1 8H5z" fill="#b07840" /></svg> },
];

export default function App() {
  return (
    <Page>
      <Global />
      <TitleBar>
        <AppLogo viewBox="0 0 17 17"><circle cx="8.500" cy="8.500" r="8.300" fill="#0a1aa8" /><path d="M8.500 2.500L13 8h-2.500v6.500h-4V8H4z" fill="#fff" /></AppLogo>
        <TitleText>PRO100</TitleText>
        <WinBtn><svg width="10" height="10" viewBox="0 0 10 10"><rect x="1" y="7" width="5" height="2" fill="#333" /></svg></WinBtn>
        <WinBtn>{Win("M3.500 1.500h6v6M1.500 3.500h6v6h-6z")}</WinBtn>
        <WinBtn $red><svg width="14" height="14" viewBox="0 0 14 14" stroke="#fff" strokeWidth="2.200"><path d="M2 1l10 12M12 1L2 13" /></svg></WinBtn>
      </TitleBar>

      <MenuBar>
        <MenuItem $w={36}>Файл</MenuItem>
        <MenuItem $w={48} $on $ml={2}>Правка</MenuItem>
        <MenuItem $w={30}>Вид</MenuItem>
        <MenuItem $w={57}>Элемент</MenuItem>
        <MenuItem $w={81}>Инструменты</MenuItem>
        <MenuItem $w={52}>Справка</MenuItem>
      </MenuBar>

      <Dropdown>
        {dropdown.map((r, i) => r === null ? <DropSep key={i} /> : (
          <DropRow key={i} $dim={r.dim}>
            <DropIcon>
              {r.i === "grip" ? <GripIcon s={16} /> : r.i && <Ico d={P[r.i]} c={r.dim ? "#a8a8b0" : "#111"} w={r.i === "del" ? 2 : r.i === "undo" || r.i === "redo" ? 1.4 : 1} s={16} />}
            </DropIcon>
            <DropLabel>{r.t}</DropLabel>
            <DropKey>{r.k}</DropKey>
          </DropRow>
        ))}
      </Dropdown>

      <ToolRow $h={32}>
        <Band $w={564}>
          <Grip $w={9} />
          <Tool><Ico d={P.doc} /></Tool>
          <Gap $w={241} />
          <Tool><Ico d={P.undo} w={1.4} /></Tool>
          <Tool><Ico d={P.redo} c={DIS} w={1.4} /></Tool>
          <Sep $w={6} />
          <Tool><Ico d={P.prop} c={DIS} /></Tool>
          <Sep $w={5} />
          <Tool><WinIcon><path d="M5 7.500l1.500 2 2-3M5 12l1.500 2 2-3M10 9h3M10 13h3" stroke="#111" /></WinIcon></Tool>
          <Sep $w={7} />
          <Tool $on><WinIcon><rect x="7" y="7" width="9" height="9" fill="#3aa88c" stroke="#1a5a5a" /><path d="M7 10h9M7 13h9M11 7v9" stroke="#cff" /></WinIcon></Tool>
          <Tool><WinIcon><circle cx="9" cy="10" r="3" fill="#dfe8f4" stroke="#2a3a6a" /><path d="M11 12l5 5" stroke="#222" strokeWidth="1.500" /></WinIcon></Tool>
          <Tool $on><WinIcon><path d="M5 7h3v2H5zM9 10h3v2H9zM9 13h3v2H9zM6 9v5h3" stroke="#222" /></WinIcon></Tool>
          <Tool><WinIcon><path d="M2.500 10h12M5 8l-2 2 2 2M12 8l2 2-2 2" stroke="#222" /></WinIcon></Tool>
          <Tool><WinIcon><path d="M8.500 6.500a3 3 0 0 1 2 5v2h-4v-2a3 3 0 0 1 2-5z" fill="#f4e45c" stroke="#8a8a30" /></WinIcon></Tool>
          <Tool><WinIcon><circle cx="11" cy="12" r="4" fill="#e0c428" stroke="#6a5a10" /><path d="M11 10v4" stroke="#333" /></WinIcon></Tool>
          <Sep $w={5} />
          <Tool><Ico d={P.sigma} w={1.4} /></Tool>
        </Band>
        <Band $w={670} $left={8}>
          <Grip $w={10} />
          {(["al1", "al2", "al3", "al4", "al5", "al6"] as const).map(k => <Tool key={k}><Ico d={P[k]} c={DIS} /></Tool>)}
          <Sep $w={6} />
          {(["d1", "d2", "d3", "d4", "d5", "d6"] as const).map(k => <Tool key={k}><Ico d={P[k]} c={DIS} /></Tool>)}
          <Sep $w={6} />
          <Grip $w={8} />
          <Tool><GripIcon /></Tool>
          <Sep $w={7} />
          <Tool><Ico d={P.plusm} /></Tool>
          <Tool><Ico d={P.arrow} c="#1a2a8a" /></Tool>
          <Tool><Ico d={P.pen} /></Tool>
          <Sep $w={6} />
          <Tool><Ico d={P.grp} c={DIS} /></Tool>
          <Tool><Ico d={P.ungrp} c={DIS} /></Tool>
          <Sep $w={6} />
          <Tool><Ico d={P.rot1} c={DIS} /></Tool>
          <Tool><Ico d={P.rot2} c={DIS} /></Tool>
          <Sep $w={5} />
          <Tool><Ico d={P.ccw} c={DIS} /></Tool>
          <Tool><Ico d={P.move} c={DIS} /></Tool>
          <Tool><Ico d={P.mirror} c={DIS} /></Tool>
          <Sep $w={7} />
          <Tool><Ico d={P.corner} c={DIS} /></Tool>
          <Sep $w={6} />
          <Tool><Tgt /></Tool>
        </Band>
      </ToolRow>

      <ToolRow $h={33}>
        <Band $w={512} $flat>
          <Grip $w={9} />
          <Tool><Ico d={P.cube} /></Tool>
          <Gap $w={235} />
          <Tool><Ico d="M1 9h5M3 7L1 9l2 2M12 9h5M15 7l2 2-2 2M6 5c2-2 4-2 6 0M6 5v8M12 5v8" /></Tool>
          <Tool $on><svg width="18" height="18" viewBox="0 0 18 18" stroke="#a01818" fill="none"><path d="M2.500 2v14M6.500 2v14M10.500 2v14M14.500 2v14M1 3.500h16M1 7.500h16M1 11.500h16M1 15.500h16" /></svg></Tool>
          <Sep $w={5} />
          <Tool><svg width="18" height="18" viewBox="0 0 18 18"><path d="M3 12V8a6 6 0 0 1 12 0v4h-3V8a3 3 0 0 0-6 0v4z" fill="#c01820" /><path d="M3 14h3M12 14h3" stroke="#444" /></svg></Tool>
          <Gap $w={1} />
          <Tool $on><Tgt fillC="#1a1a9a" /></Tool>
          <Sep $w={5} />
          <Tool><Tgt /></Tool>
          <Sep $w={6} />
          <Tool><Ico d={P.zoomIn} c={DIS} /></Tool>
          <Gap $w={2} />
          <ZoomCombo><ComboArrowBox><Dn c="#b4b4bc" /></ComboArrowBox></ZoomCombo>
          <Tool><Ico d={P.zoomOut} c={DIS} /></Tool>
        </Band>
      </ToolRow>

      <Main>
        <LeftBar>
          <LeftBand>
            <HGrip />
            <Tool $on><Ico d={P.arrow} /></Tool>
            <HSep />
            <Tool><Ico d={P.sun} /></Tool>
            <Tool><Ico d={P.grp} c="#b8b8c0" /></Tool>
            <Tool><Ico d={P.al1} c={DIS} /></Tool>
            <Tool><Ico d={P.d1} c={DIS} /></Tool>
            <Tool><Ico d={P.zoomIn} c={DIS} /></Tool>
          </LeftBand>
        </LeftBar>
        <Center>
          <ViewRow>
            <Room />
            <VBar>
              <SBtn><Up /></SBtn>
              <Pad $h={367} />
              <Thumb $w={15} $h={52}><VGrip /></Thumb>
              <Fill />
              <SBtn><Dn /></SBtn>
            </VBar>
          </ViewRow>
          <HBar>
            <SBtn $w={14}><Lf /></SBtn>
            <Pad $w={459} />
            <Thumb $w={64} $h={15}><HGripI /></Thumb>
            <Fill />
            <SBtn $w={14}><Rg /></SBtn>
          </HBar>
          <TabStrip>
            {sheetTabs.map(([t, w], i) => (
              <SheetTab key={t} $w={w} $on={i === 0}>
                <Slash $dir="l" /><TabLabel>{t}</TabLabel><Slash $dir="r" />
              </SheetTab>
            ))}
          </TabStrip>
        </Center>
        <Right>
          <DockHead>
            <DockTitle>Библиотека</DockTitle>
            <DockClose>{Win("M2 2l7 7M9 2L2 9", "#111")}</DockClose>
          </DockHead>
          <Tabs>
            <Tab $w={49}>Мебель</Tab>
            <Tab $w={61}>Элементы</Tab>
            <Tab $w={72} $on $ml={-1}>Материалы</Tab>
            <Tab $w={45}>Другое</Tab>
          </Tabs>
          <TabBody $h={382}>
            <ComboRow>
              <FolderCombo>
                <FolderI />
                <ComboText>Цвета</ComboText>
                <ComboBtn><Dn /></ComboBtn>
              </FolderCombo>
              <MiniBtn $ml={3}><svg width="16" height="14" viewBox="0 0 16 14"><path d="M1 3l1-2h5l1 2h7v10H1z" fill="#f8ee98" stroke="#333" /><path d="M8 11V6M6 8l2-2 2 2M8 10.500h4" stroke="#222" fill="none" /></svg></MiniBtn>
              <MiniBtn $ml={4} $on><svg width="16" height="14" viewBox="0 0 16 14" fill="none" stroke="#223"><path d="M3.500 1.500h3v3h-3zM9.500 6.500h3v3h-3zM2 6.500h6M8 12.500h6" /></svg></MiniBtn>
              <MiniBtn $ml={2}><Ico d={P.listI} s={15} /></MiniBtn>
            </ComboRow>
            <ListBox>
              <Tiles>
                {tiles.map(([t, c, w], i) => (
                  <Tile key={i}>
                    <SwatchBox><Swatch $c={c} $w={w} /></SwatchBox>
                    <TileLabel>{t}</TileLabel>
                  </Tile>
                ))}
              </Tiles>
              <ListScroll>
                <SBtn><Up /></SBtn>
                <Pad $h={45} />
                <Thumb $w={15} $h={21}><VGrip /></Thumb>
                <Fill />
                <SBtn><Dn /></SBtn>
              </ListScroll>
            </ListBox>
          </TabBody>
          <Pad $h={10} />
          <DockHead>
            <DockTitle>Структура</DockTitle>
            <DockClose>{Win("M2 2l7 7M9 2L2 9", "#111")}</DockClose>
          </DockHead>
          <Tabs>
            <Tab $w={52} $on>Проект</Tab>
            <Tab $w={70}>Выделенное</Tab>
          </Tabs>
          <TabBody>
            <Tree>
              {["кроватка", "стеллаж", "стеллаж", "угловой шкаф"].map((t, i) => (
                <TreeRow key={i}>
                  <Plus /><Dots /><Check />
                  <TreeIcon viewBox="0 0 14 13">
                    <rect x="1" y="1" width="7" height="5" fill="#8ee0e8" stroke="#7a9a9a" strokeWidth=".6" />
                    <rect x="3" y="6" width="5" height="6" fill="#f0e080" stroke="#a09a50" strokeWidth=".6" />
                    <rect x="8" y="1" width="5" height="11" fill="#c07a48" stroke="#805030" strokeWidth=".6" />
                  </TreeIcon>
                  <TreeText>{t}</TreeText>
                </TreeRow>
              ))}
            </Tree>
          </TabBody>
        </Right>
      </Main>

      <Status>Отменить, удалить, скопировать и вставить.</Status>
      <Taskbar>
        <Start>
          <svg width="18" height="17" viewBox="0 0 18 17"><path d="M2 2l6 1v5l-6-1z" fill="#e85a28" /><path d="M9 3l7-1-1 6-6 1z" fill="#6cc040" /><path d="M2 8l6 1v6l-6-1z" fill="#3a7ae0" /><path d="M9 10l6-1-1 6-5 1z" fill="#f4c430" /></svg>
          <StartText>пуск</StartText>
        </Start>
        <Tasks>
          {tasks.map(t => (
            <Task key={t.t} $on={t.on} $w={t.w}>
              {t.icon}
              <TaskText>{t.c && <TaskCount>{t.c} </TaskCount>}{t.t}</TaskText>
              {t.arrow && <TaskArrow />}
            </Task>
          ))}
        </Tasks>
        <Lang>RL</Lang>
        <Tray>
          <Chevron viewBox="0 0 19 19"><circle cx="9.500" cy="9.500" r="9" fill="#8a8aa0" stroke="#e8e8f0" /><path d="M11 5l-4 4.500 4 4.500" stroke="#fff" strokeWidth="2" fill="none" /></Chevron>
          <TrayI viewBox="0 0 15 17"><circle cx="7.500" cy="8.500" r="7" fill="#1a7a50" /><path d="M5 5v5a2.500 2.500 0 0 0 5 0V5" stroke="#fff" strokeWidth="2" fill="none" /></TrayI>
          <TrayI viewBox="0 0 15 17"><path d="M7.500 1l5 13H2.500z" fill="#f08a1c" /><path d="M5.500 7h4M4.500 10h6" stroke="#fff" strokeWidth="1.300" /><rect x="1" y="14" width="13" height="2" fill="#d0701c" /></TrayI>
          <TrayI viewBox="0 0 15 17"><path d="M1 2h4v5l5-5h4L8 9l-3 5H1z" fill="#d01020" /><path d="M8 10l4 4 2-2-2-3z" fill="#111" /></TrayI>
          <TrayI viewBox="0 0 15 17"><path d="M2 3l10-1 2 6-3 7H4L1 9z" fill="#8cc050" /><path d="M5 8l2 2 4-4" stroke="#fff" strokeWidth="1.500" fill="none" /></TrayI>
          <TrayI viewBox="0 0 15 17"><path d="M8 1l6 7h-3v8H5V8H2z" fill="#7cc040" /><circle cx="6" cy="13" r="3" fill="#e89030" /></TrayI>
          <Clock>17:25</Clock>
        </Tray>
      </Taskbar>
    </Page>
  );
}
